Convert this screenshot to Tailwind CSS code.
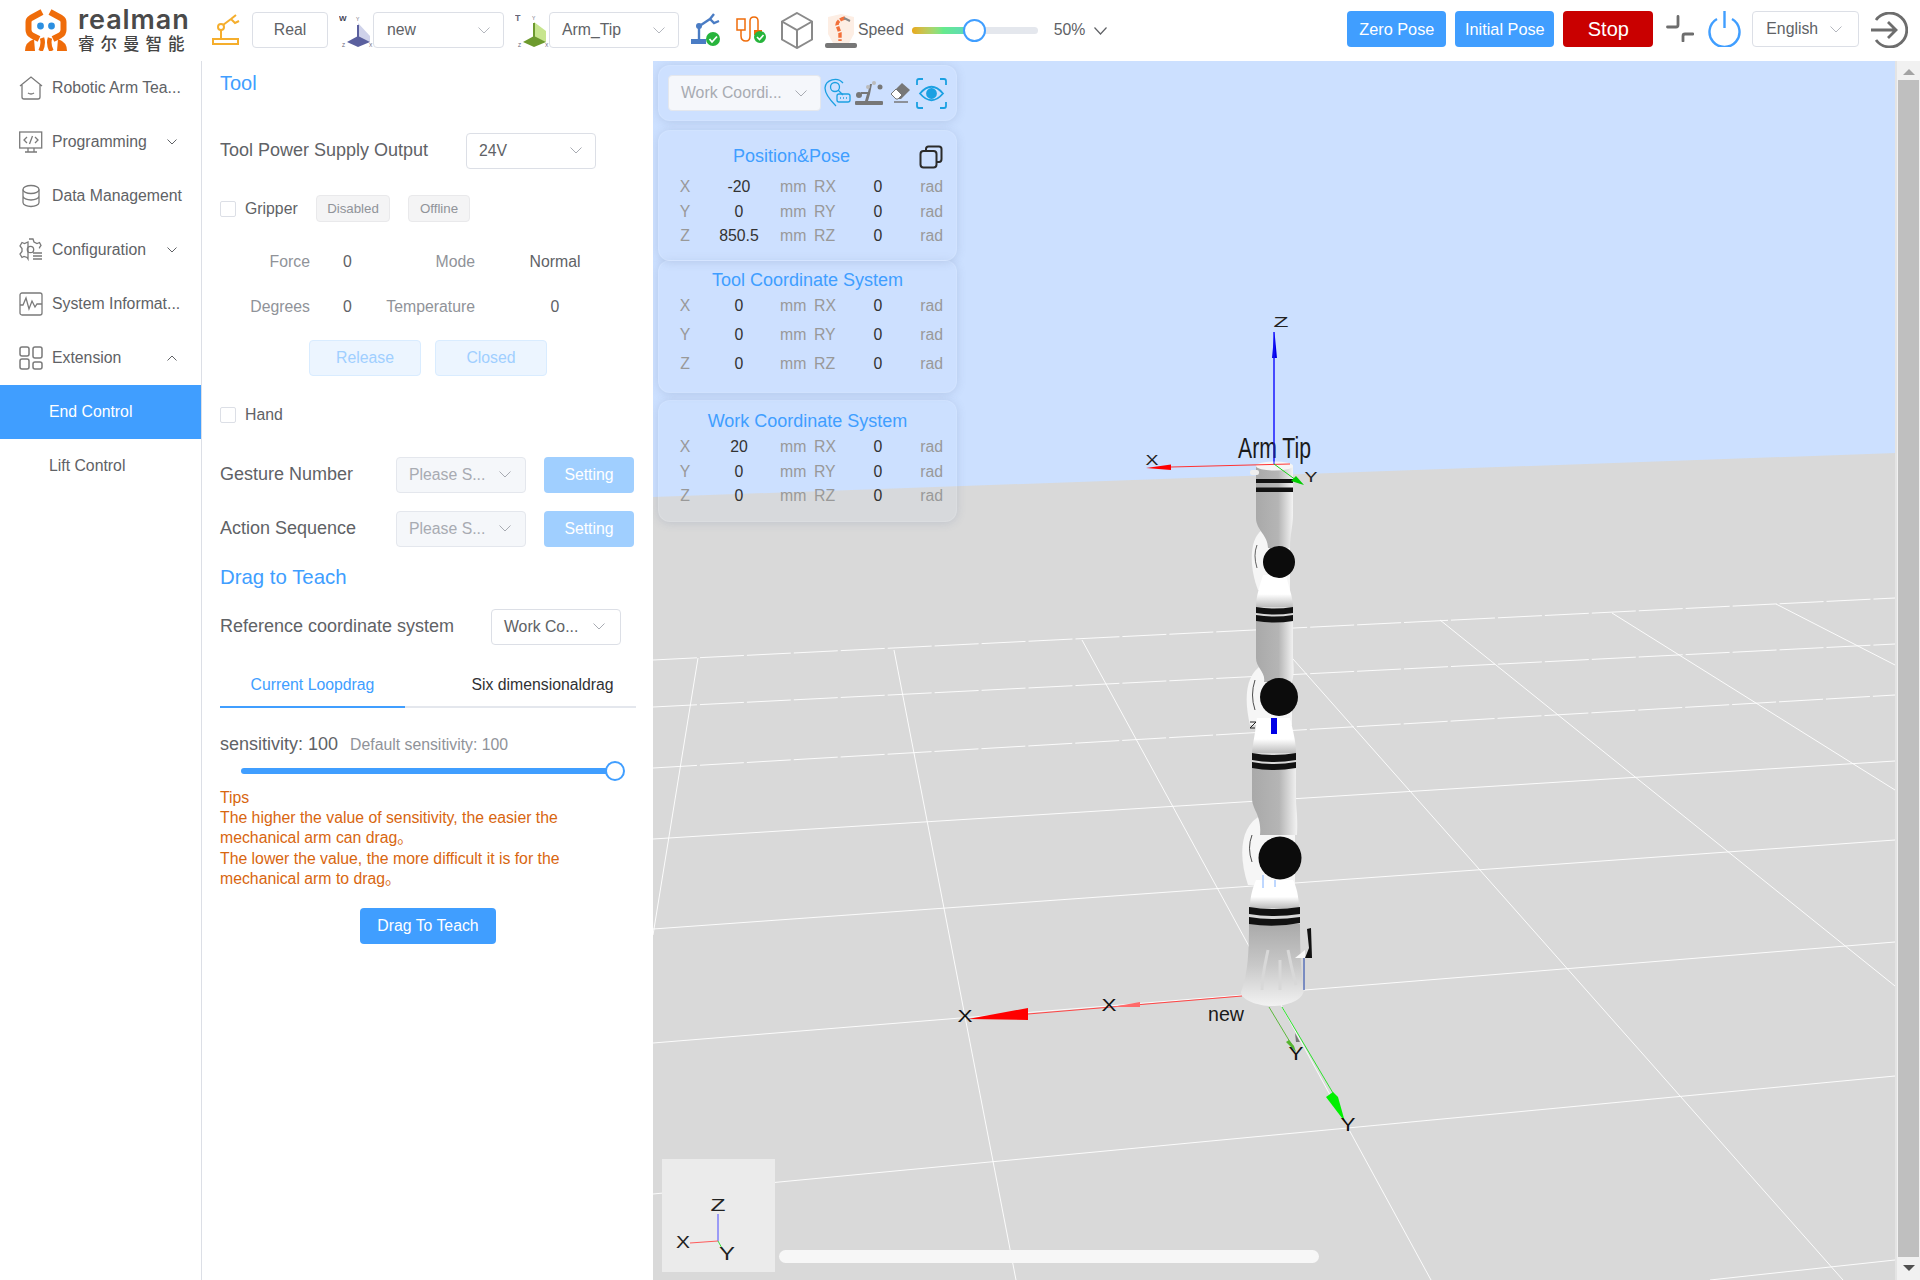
<!DOCTYPE html>
<html lang="en">
<head>
<meta charset="utf-8">
<title>Realman</title>
<script src="https://cdn.jsdelivr.net/npm/@tailwindcss/browser@4"></script>
</head>
<body class="m-0 bg-white">
<div class="w-[1920px] h-[1280px] overflow-hidden flex flex-col font-['Liberation_Sans','Noto_Sans_CJK_SC',sans-serif] text-[#606266] text-[15.8px]">

  <!-- HEADER -->
  <header class="h-[61px] shrink-0 flex items-start bg-white">
    <svg class="ml-[25px] mt-[9px] shrink-0" width="42" height="42" viewBox="0 0 42 42" fill="none">
      <path d="M17 3 L6 9 Q3.500 10.500 3.500 13 L3.500 21 Q3.500 24.500 7 26.500 L14 30" stroke="#ef6c0a" stroke-width="6" stroke-linejoin="round"/>
      <path d="M25 3 L36 9 Q38.500 10.500 38.500 13 L38.500 21 Q38.500 24.500 35 26.500 L28 30" stroke="#ef6c0a" stroke-width="6" stroke-linejoin="round"/>
      <circle cx="15.500" cy="17" r="3.400" fill="#2c8fe0"/><circle cx="26.500" cy="17" r="3.400" fill="#2c8fe0"/>
      <path d="M0 42 Q0 33 9 30 L10 42 Z" fill="#ef6c0a"/><path d="M42 42 Q42 33 33 30 L32 42 Z" fill="#ef6c0a"/>
      <path d="M17 29 Q19 35 15.500 42" stroke="#ef6c0a" stroke-width="4.500"/><path d="M25 29 Q23 35 26.500 42" stroke="#ef6c0a" stroke-width="4.500"/>
    </svg>
    <div class="ml-[11px] mt-[8px] w-[112px] shrink-0 flex flex-col">
      <span class="font-['Inter',sans-serif] font-semibold text-[27px] leading-[24px] tracking-[0.9px] text-[#4a4a4a] whitespace-nowrap">realman</span>
      <span class="font-['Noto_Sans_CJK_SC',sans-serif] font-medium text-[16.500px] leading-[20px] tracking-[6px] mt-[1px] text-[#444] whitespace-nowrap">睿尔曼智能</span>
    </div>
    <svg class="ml-[22px] mt-[14px] shrink-0" width="28" height="32" viewBox="0 0 28 32" fill="none" stroke="#f5ae2d" stroke-width="2">
      <rect x="1" y="25" width="25" height="5"/><path d="M9 25 V15"/><circle cx="9" cy="13" r="3"/><path d="M11 11 L19 5 M19 5 L24 1 M19 5 L23 9 L27 7"/>
    </svg>
    <div class="ml-[12px] mt-[12px] w-[76px] h-[36px] shrink-0 border border-[#dcdfe6] rounded flex items-center justify-center">Real</div>
    <svg class="ml-[11px] mt-[13px] shrink-0" width="34" height="36" viewBox="0 0 34 36">
      <text x="0" y="8" font-size="8" font-weight="700" fill="#445" font-family="Liberation Sans">W</text>
      <path d="M19 10 L31 23 V29 L19 24Z" fill="#cfd2ea"/><path d="M19 12 V24" stroke="#5a5f9e" stroke-width="2"/><path d="M8 29 L19 23 L31 29 L19 34 Z" fill="#5a5f9e"/>
      <text x="17" y="8" font-size="5" fill="#667" font-family="Liberation Sans">Y</text><text x="30" y="34" font-size="5" fill="#667" font-family="Liberation Sans">X</text><text x="3" y="34" font-size="5" fill="#667" font-family="Liberation Sans">Z</text>
    </svg>
    <div class="mt-[12px] w-[131px] h-[36px] shrink-0 border border-[#dcdfe6] rounded flex items-center justify-between pl-[13px] pr-[13px] box-border">new
      <svg width="12" height="7" viewBox="0 0 12 7" fill="none" stroke="#b4b7be"><path d="M.5 .5 6 6 11.500 .5"/></svg>
    </div>
    <svg class="ml-[11px] mt-[13px] shrink-0" width="34" height="36" viewBox="0 0 34 36">
      <text x="0" y="8" font-size="9" font-weight="700" fill="#667" font-family="Liberation Sans">T</text>
      <path d="M19 9 L31 18 V29 L19 24Z" fill="#c7e58e"/><path d="M19 10 V24" stroke="#6d9a2e" stroke-width="2"/><path d="M8 29 L19 23 L31 29 L19 34 Z" fill="#6d9a2e"/>
      <text x="17" y="7" font-size="5" fill="#667" font-family="Liberation Sans">Y</text><text x="30" y="34" font-size="5" fill="#667" font-family="Liberation Sans">X</text><text x="3" y="34" font-size="5" fill="#667" font-family="Liberation Sans">Z</text>
    </svg>
    <div class="mt-[12px] w-[130px] h-[36px] shrink-0 border border-[#dcdfe6] rounded flex items-center justify-between pl-[12px] pr-[13px] box-border">Arm_Tip
      <svg width="12" height="7" viewBox="0 0 12 7" fill="none" stroke="#b4b7be"><path d="M.5 .5 6 6 11.500 .5"/></svg>
    </div>
    <svg class="ml-[12px] mt-[13px] shrink-0" width="30" height="34" viewBox="0 0 30 34" fill="none">
      <path d="M0 26 H15 V31 H0Z" fill="#4a7cc4"/><path d="M8 26 V15" stroke="#4a7cc4" stroke-width="2.400"/><circle cx="8" cy="13" r="3" fill="#4a7cc4"/><path d="M10 12 L19 6 M19 6 L23 1 M19 6 L23 10 L28 8" stroke="#4a7cc4" stroke-width="2.400"/>
      <circle cx="22" cy="26" r="7" fill="#27b43c"/><path d="M18.500 26 L21 29 L26 23.500" stroke="#fff" stroke-width="1.800"/>
    </svg>
    <svg class="ml-[14px] mt-[16px] shrink-0" width="34" height="28" viewBox="0 0 34 28" fill="none">
      <rect x="2" y="3" width="8" height="11" stroke="#ef6c0a" stroke-width="1.500"/><path d="M6 14 V20 Q6 25 11 25 Q15 25 15 20 V5 Q15 1 19 1 Q23 1 23 5 V14" stroke="#ef6c0a" stroke-width="1.500"/><rect x="19" y="14" width="8" height="5" fill="#ef6c0a"/>
      <circle cx="25" cy="21" r="6" fill="#27b43c"/><path d="M22 21 L24.500 23.500 L28.500 19" stroke="#fff" stroke-width="1.600"/>
    </svg>
    <svg class="ml-[11px] mt-[12px] shrink-0" width="34" height="37" viewBox="0 0 34 37" fill="none" stroke="#8a8a8a" stroke-width="2">
      <path d="M17 1 L32 9.500 V27.500 L17 36 L2 27.500 V9.500 Z M2 9.500 L17 18 L32 9.500 M17 18 V36"/>
    </svg>
    <svg class="ml-[11px] mt-[14px] shrink-0" width="34" height="34" viewBox="0 0 34 34" fill="none">
      <path d="M3 3 L16 0 L29 3 V20 L24 29 H8 L3 20Z" fill="#fdeee4"/>
      <path d="M20 4 Q12 6 12 11 L15 19 L15 27" stroke="#f2703a" stroke-width="3.400" stroke-dasharray="5 1.500"/>
      <path d="M19 4 L25 7" stroke="#888" stroke-width="2"/>
      <rect x="0" y="29" width="32" height="5" rx="2" fill="#777"/>
    </svg>
    <span class="-ml-[1px] mt-[21px] leading-[18px] shrink-0">Speed</span>
    <div class="ml-[8px] mt-[27px] w-[126px] h-[7px] rounded-full bg-[#e4e7ed] relative shrink-0">
      <div class="h-full w-[62px] rounded-l-full bg-gradient-to-r from-[#e9a90f] via-[#66ea8c] to-[#5fd3c5]"></div>
      <div class="absolute left-[51px] -top-[8px] w-[23px] h-[23px] rounded-full border-2 border-[#409eff] bg-white box-border"></div>
    </div>
    <span class="ml-[16px] mt-[21px] leading-[18px] shrink-0">50%</span>
    <svg class="ml-[9px] mt-[27px] shrink-0" width="13" height="8" viewBox="0 0 13 8" fill="none" stroke="#606266" stroke-width="1.200"><path d="M.5 .5 6.500 7 12.500 .5"/></svg>
    <div class="ml-[240px] mt-[11px] w-[99px] h-[36px] shrink-0 bg-[#409eff] rounded text-white text-[16.300px] flex items-center justify-center">Zero Pose</div>
    <div class="ml-[9px] mt-[11px] w-[99px] h-[36px] shrink-0 bg-[#409eff] rounded text-white text-[16.300px] flex items-center justify-center">Initial Pose</div>
    <div class="ml-[9px] mt-[11px] w-[90px] h-[36px] shrink-0 bg-[#c90000] rounded text-white text-[20px] flex items-center justify-center">Stop</div>
    <svg class="ml-[13px] mt-[15px] shrink-0" width="28" height="27" viewBox="0 0 28 27" fill="none" stroke="#6d6d6d" stroke-width="2.800" stroke-linecap="round"><path d="M1.500 12 H10 Q12 12 12 10 V1.500"/><path d="M27 19 H19 Q17 19 17 21 V26"/></svg>
    <svg class="ml-[14px] mt-[11px] shrink-0" width="33" height="36" viewBox="0 0 33 36" fill="none" stroke="#409eff" stroke-width="2.400"><path d="M9 8 A15 15 0 1 0 24 8"/><path d="M16.500 0 V17"/></svg>
    <div class="ml-[11px] mt-[11px] w-[107px] h-[36px] shrink-0 border border-[#dcdfe6] rounded flex items-center justify-between pl-[13px] pr-[16px] box-border">English
      <svg width="12" height="7" viewBox="0 0 12 7" fill="none" stroke="#b4b7be"><path d="M.5 .5 6 6 11.500 .5"/></svg>
    </div>
    <svg class="ml-[12px] mt-[12px] shrink-0" width="37" height="36" viewBox="0 0 37 36" fill="none" stroke="#6d6d6d" stroke-width="2.800"><path d="M5 8 A17 17 0 1 1 5 28"/><path d="M0 18 H24 M17 10 L25 18 L17 26"/></svg>
  </header>

  <div class="flex-1 flex min-h-0">
    <!-- SIDEBAR -->
    <nav class="w-[202px] shrink-0 border-r border-[#dcdfe6] box-border flex flex-col">
      <div class="h-[54px] flex items-center pl-[19px]">
        <svg class="shrink-0" width="24" height="24" viewBox="0 0 24 24" fill="none" stroke="#7a7a7a" stroke-width="1.300"><path d="M1 10 L12 1 L23 10 M3 9 V21 Q3 23 5 23 H19 Q21 23 21 21 V9 M9 17 Q12 19 15 17"/></svg>
        <span class="ml-[9px] whitespace-nowrap">Robotic Arm Tea...</span>
      </div>
      <div class="h-[54px] flex items-center pl-[19px]">
        <svg class="shrink-0" width="24" height="24" viewBox="0 0 24 24" fill="none" stroke="#7a7a7a" stroke-width="1.300"><rect x=".7" y="2" width="22" height="16"/><path d="M8 7 L5 10 L8 13 M16 7 L19 10 L16 13 M13.500 6 L10.500 14 M9 18 V22 M15 18 V22 M6 22 H18"/></svg>
        <span class="ml-[9px]">Programming</span>
        <svg class="ml-auto mr-[24px]" width="10" height="6" viewBox="0 0 10 6" fill="none" stroke="#606266"><path d="M.5 .5 5 5 9.500 .5"/></svg>
      </div>
      <div class="h-[54px] flex items-center pl-[19px]">
        <svg class="shrink-0" width="24" height="24" viewBox="0 0 24 24" fill="none" stroke="#7a7a7a" stroke-width="1.300"><ellipse cx="12" cy="5.500" rx="8" ry="4"/><path d="M4 5.500 V18.500 C4 21 8 22.500 12 22.500 C16 22.500 20 21 20 18.500 V5.500 M4 12 C4 14.500 8 16 12 16 C16 16 20 14.500 20 12"/></svg>
        <span class="ml-[9px] whitespace-nowrap">Data Management</span>
      </div>
      <div class="h-[54px] flex items-center pl-[19px]">
        <svg class="shrink-0" width="24" height="24" viewBox="0 0 24 24" fill="none" stroke="#7a7a7a" stroke-width="1.300"><path d="M10 1 H14 L15 4 L18 5.500 L20.500 4.500 L22 7.500 L20.500 9.500 V10.500 M9 21 L8 19.500 L5 18.500 L3 19.500 L1 16 L3 13.500 V10.500 L1 8 L3 4.500 L5.500 5.500 L9 4 Z"/><circle cx="11.500" cy="11.500" r="3.200"/><path d="M14 15 H23 M14 18 H23 M14 21 H23"/></svg>
        <span class="ml-[9px]">Configuration</span>
        <svg class="ml-auto mr-[24px]" width="10" height="6" viewBox="0 0 10 6" fill="none" stroke="#606266"><path d="M.5 .5 5 5 9.500 .5"/></svg>
      </div>
      <div class="h-[54px] flex items-center pl-[19px]">
        <svg class="shrink-0" width="24" height="24" viewBox="0 0 24 24" fill="none" stroke="#7a7a7a" stroke-width="1.300"><rect x="1" y="1" width="22" height="22" rx="2"/><path d="M1 13 H4 L7 6 L10 17 L13 9 L16 15 L18 12 H23"/></svg>
        <span class="ml-[9px] whitespace-nowrap">System Informat...</span>
      </div>
      <div class="h-[54px] flex items-center pl-[19px]">
        <svg class="shrink-0" width="24" height="24" viewBox="0 0 24 24" fill="none" stroke="#7a7a7a" stroke-width="1.500"><rect x="1" y="1" width="9" height="9" rx="2"/><rect x="14" y="1" width="9" height="11" rx="2"/><rect x="1" y="13" width="9" height="10" rx="2"/><rect x="14" y="16" width="9" height="7" rx="2"/></svg>
        <span class="ml-[9px]">Extension</span>
        <svg class="ml-auto mr-[24px]" width="10" height="6" viewBox="0 0 10 6" fill="none" stroke="#606266"><path d="M.5 5.500 5 1 9.500 5.500"/></svg>
      </div>
      <div class="h-[54px] flex items-center pl-[49px] bg-[#409eff] text-white">End Control</div>
      <div class="h-[54px] flex items-center pl-[49px]">Lift Control</div>
    </nav>

    <!-- CONTROL PANEL -->
    <section class="w-[451px] shrink-0 pl-[18px] pr-[17px] box-border flex flex-col">
      <div class="h-[44px] flex items-center text-[20px] text-[#409eff]">Tool</div>
      <div class="mt-[28px] h-[35px] flex items-center text-[18px]">
        <span class="w-[246px]">Tool Power Supply Output</span>
        <div class="w-[130px] h-[36px] border border-[#dcdfe6] rounded flex items-center justify-between pl-[12px] pr-[13px] box-border text-[15.800px]">24V
          <svg width="12" height="7" viewBox="0 0 12 7" fill="none" stroke="#a8abb2"><path d="M.5 .5 6 6 11.500 .5"/></svg>
        </div>
      </div>
      <div class="mt-[27px] h-[27px] flex items-center">
        <span class="w-[16px] h-[16px] border border-[#dcdfe6] rounded-[2px] box-border shrink-0"></span>
        <span class="ml-[9px] w-[71px]">Gripper</span>
        <span class="w-[74px] h-[27px] rounded bg-[#f4f4f5] border border-[#e9e9eb] box-border text-[#909399] text-[13.300px] flex items-center justify-center">Disabled</span>
        <span class="ml-[18px] w-[62px] h-[27px] rounded bg-[#f4f4f5] border border-[#e9e9eb] box-border text-[#909399] text-[13.300px] flex items-center justify-center">Offline</span>
      </div>
      <div class="mt-[25px] h-[30px] flex items-center">
        <span class="w-[90px] text-right text-[#909399]">Force</span><span class="w-[36px] ml-[33px]">0</span>
        <span class="w-[96px] text-right text-[#909399]">Mode</span><span class="w-[120px] ml-[20px] text-center">Normal</span>
      </div>
      <div class="mt-[15px] h-[30px] flex items-center">
        <span class="w-[90px] text-right text-[#909399]">Degrees</span><span class="w-[36px] ml-[33px]">0</span>
        <span class="w-[96px] text-right text-[#909399]">Temperature</span><span class="w-[120px] ml-[20px] text-center">0</span>
      </div>
      <div class="mt-[18px] flex ml-[89px] gap-[14px]">
        <span class="w-[112px] h-[36px] rounded bg-[#ecf5ff] border border-[#d9ecff] box-border text-[#a0cfff] flex items-center justify-center">Release</span>
        <span class="w-[112px] h-[36px] rounded bg-[#ecf5ff] border border-[#d9ecff] box-border text-[#a0cfff] flex items-center justify-center">Closed</span>
      </div>
      <div class="mt-[25px] h-[28px] flex items-center">
        <span class="w-[16px] h-[16px] border border-[#dcdfe6] rounded-[2px] box-border shrink-0"></span>
        <span class="ml-[9px]">Hand</span>
      </div>
      <div class="mt-[28px] h-[35px] flex items-center text-[18px]">
        <span class="w-[176px]">Gesture Number</span>
        <div class="w-[130px] h-[36px] border border-[#e4e7ed] bg-[#f5f7fa] rounded flex items-center justify-between pl-[12px] pr-[14px] box-border text-[15.800px] text-[#a8abb2]">Please S...
          <svg width="12" height="7" viewBox="0 0 12 7" fill="none" stroke="#a8abb2"><path d="M.5 .5 6 6 11.500 .5"/></svg>
        </div>
        <span class="ml-[18px] w-[90px] h-[36px] rounded bg-[#a0cfff] text-white text-[15.800px] flex items-center justify-center">Setting</span>
      </div>
      <div class="mt-[19px] h-[35px] flex items-center text-[18px]">
        <span class="w-[176px]">Action Sequence</span>
        <div class="w-[130px] h-[36px] border border-[#e4e7ed] bg-[#f5f7fa] rounded flex items-center justify-between pl-[12px] pr-[14px] box-border text-[15.800px] text-[#a8abb2]">Please S...
          <svg width="12" height="7" viewBox="0 0 12 7" fill="none" stroke="#a8abb2"><path d="M.5 .5 6 6 11.500 .5"/></svg>
        </div>
        <span class="ml-[18px] w-[90px] h-[36px] rounded bg-[#a0cfff] text-white text-[15.800px] flex items-center justify-center">Setting</span>
      </div>
      <div class="mt-[13px] h-[36px] flex items-center text-[20.400px] text-[#409eff]">Drag to Teach</div>
      <div class="mt-[14px] h-[35px] flex items-center text-[18px]">
        <span class="w-[271px]">Reference coordinate system</span>
        <div class="w-[130px] h-[36px] border border-[#dcdfe6] rounded flex items-center justify-between pl-[12px] pr-[15px] box-border text-[15.800px]">Work Co...
          <svg width="12" height="7" viewBox="0 0 12 7" fill="none" stroke="#a8abb2"><path d="M.5 .5 6 6 11.500 .5"/></svg>
        </div>
      </div>
      <div class="mt-[20px] h-[44px] w-[416px] flex border-b-2 border-[#e4e7ed] box-border">
        <div class="w-[185px] h-[44px] border-b-2 border-[#409eff] text-[#409eff] box-border flex items-center justify-center">Current Loopdrag</div>
        <div class="flex-1 h-[42px] flex items-center justify-center text-[#303133] pl-[44px]">Six dimensionaldrag</div>
      </div>
      <div class="mt-[22px] h-[28px] flex items-baseline leading-[28px]">
        <span class="text-[18px]">sensitivity: 100</span>
        <span class="ml-[12px] text-[#909399]">Default sensitivity: 100</span>
      </div>
      <div class="mt-[3px] h-[20px] ml-[21px] w-[374px] relative flex items-center">
        <div class="w-full h-[6px] rounded-full bg-[#409eff]"></div>
        <div class="absolute -right-[10px] top-0 w-[20px] h-[20px] rounded-full border-2 border-[#409eff] bg-white box-border"></div>
      </div>
      <div class="mt-[7px] leading-[20.200px] text-[#d8660f]">
        <div>Tips</div>
        <div>The higher the value of sensitivity, the easier the</div>
        <div>mechanical arm can drag。</div>
        <div>The lower the value, the more difficult it is for the</div>
        <div>mechanical arm to drag。</div>
      </div>
      <div class="mt-[19px] ml-[140px] w-[136px] h-[36px] rounded bg-[#409eff] text-white flex items-center justify-center">Drag To Teach</div>
    </section>

    <!-- 3D VIEW -->
    <main class="flex-1 relative bg-[#cce0ff] overflow-hidden">
      <svg class="absolute inset-0" width="1267" height="1219" viewBox="653 61 1267 1219" font-family="Liberation Sans">
        <defs>
          <linearGradient id="arm" x1="0" x2="1" y1="0" y2="0"><stop offset="0" stop-color="#a9a9a9"/><stop offset=".6" stop-color="#b5b5b5"/><stop offset=".85" stop-color="#dcdcdc"/><stop offset="1" stop-color="#f4f4f4"/></linearGradient>
          <linearGradient id="wht" x1="0" x2="0" y1="0" y2="1"><stop offset="0" stop-color="#fff"/><stop offset=".6" stop-color="#fff"/><stop offset="1" stop-color="#bdbdbd"/></linearGradient>
          <linearGradient id="base" x1="0" x2="0" y1="0" y2="1"><stop offset="0" stop-color="#aaa"/><stop offset=".5" stop-color="#c8c8c8"/><stop offset="1" stop-color="#f2f2f2"/></linearGradient>
        </defs>
        <path d="M653 497 L1896 453 V1280 H653 Z" fill="#d9d9d9"/>
        <g stroke="#fff" fill="none">
          <g stroke-width="1" stroke-dasharray="44 3" stroke-opacity=".9">
            <path d="M653 660 L1895 598"/><path d="M653 707 L1895 644"/><path d="M653 768 L1895 695"/>
          </g>
          <g stroke-width="1" stroke-opacity=".9">
            <path d="M653 839 L1895 761"/><path d="M653 929 L1895 840"/><path d="M653 1043 L1895 942"/><path d="M653 1194 L1895 1076"/><path d="M1710 1280 L1895 1260"/>
            <path d="M698 658 L653 935"/><path d="M894 650 L1016 1280"/><path d="M1082 640 L1431 1280"/><path d="M1270 633 L1843 1280"/>
            <path d="M1440 620 L1895 986"/><path d="M1612 613 L1895 790"/><path d="M1776 604 L1895 665"/>
          </g>
        </g>

        <!-- tip axes -->
        <path d="M1274 332 V464" stroke="#1a1aff" stroke-width="1"/><path d="M1274.500 332 L1277 358 H1272Z" fill="#0000e6"/>
        <text x="1281" y="327" font-size="14" text-anchor="middle" fill="#222" textLength="15" lengthAdjust="spacingAndGlyphs">Z</text>

        <!-- arm upper -->
        <path d="M1262 530 C1248 540 1250 570 1258 590 L1290 590 V530Z" fill="#f6f6f6"/>
        <path d="M1256 466 V518 C1256 530 1268 535 1268 548 L1290 548 C1290 535 1293 525 1293 515 V466Z" fill="url(#arm)"/>
        <rect x="1250" y="470" width="9" height="5" rx="2" fill="#eee"/>
        <ellipse cx="1274.500" cy="466" rx="18.500" ry="4.500" fill="#f6f6f6"/>
        <rect x="1256" y="479" width="37" height="4" fill="#111"/><rect x="1256" y="487.500" width="37" height="4.500" fill="#111"/>
        <path d="M1263 575 C1259 588 1256 597 1256 607 H1293 C1293 597 1288 585 1286 575Z" fill="url(#wht)"/>
        <circle cx="1279" cy="562" r="16" fill="#0c0c0c"/>
        <path d="M1257 545 Q1253 555 1257 568" stroke="#222" fill="none" stroke-width=".7"/>

        <path d="M1262 665 C1245 675 1244 700 1250 725 L1292 725 V665Z" fill="#f6f6f6"/>
        <path d="M1256 621 V658 C1256 668 1266 672 1264 682 L1292 682 C1295 672 1293 665 1293 655 V621Z" fill="url(#arm)"/>
        <path d="M1256 607 Q1274 610 1293 607 V613 Q1274 616 1256 613Z" fill="#111"/><path d="M1256 615 Q1274 618 1293 615 V621 Q1274 624 1256 621Z" fill="#111"/>
        <path d="M1257 718 C1255 735 1253 742 1252 753 H1296 C1296 742 1293 730 1290 718Z" fill="url(#wht)"/>
        <circle cx="1279" cy="697" r="19" fill="#0c0c0c"/>
        <path d="M1255 680 Q1250 695 1255 710" stroke="#222" fill="none" stroke-width=".8"/>
        <rect x="1271" y="718" width="6" height="16" fill="#0000e6"/>
        <path d="M1250 722 h6 l-6 6 h5" stroke="#222" fill="none" stroke-width="1"/>

        <path d="M1262 815 C1240 825 1238 855 1248 885 L1295 885 V815Z" fill="#f6f6f6"/>
        <path d="M1252 766 V798 C1252 810 1262 815 1260 835 L1297 835 C1298 815 1296 810 1296 798 V766Z" fill="url(#arm)"/>
        <path d="M1252 753 Q1274 757 1296 753 V760 Q1274 764 1252 760Z" fill="#111"/><path d="M1252 762 Q1274 766 1296 762 V768 Q1274 772 1252 768Z" fill="#111"/>
        <path d="M1256 880 C1252 890 1250 897 1250 908 H1299 C1299 897 1296 885 1293 880Z" fill="url(#wht)"/>
        <circle cx="1280" cy="858" r="21.500" fill="#0c0c0c"/>
        <path d="M1252 835 Q1247 848 1252 862" stroke="#222" fill="none" stroke-width=".8"/>
        <path d="M1263 875 V888 M1275 880 V887" stroke="#7fb0ff" stroke-width="1"/>

        <path d="M1249 924 C1249 950 1248 975 1241 992 C1241 1000 1258 1006 1272 1006 C1288 1006 1303 1000 1304 990 C1301 975 1300 950 1300 924Z" fill="url(#base)"/>
        <path d="M1262 990 C1262 975 1266 960 1268 950 M1280 990 V960 M1296 985 C1292 970 1290 960 1288 950" stroke="#d8d8d8" stroke-width="3" fill="none"/>
        <path d="M1249 907 Q1274 911 1300 907 V914 Q1274 918 1249 914Z" fill="#111"/><path d="M1249 917 Q1274 921 1300 917 V923 Q1274 928 1249 924Z" fill="#111"/>
        <path d="M1295 958 L1305 950 V958Z" fill="#f8f8f8"/>
        <path d="M1307 929 L1311 928 L1312 958 H1305 L1309 948Z" fill="#111"/>
        <path d="M1304 958 V990" stroke="#1a3ea8" stroke-width="1"/>

        <!-- tip red/green overlay -->
        <path d="M1290 464 L1171 467" stroke="#f33" stroke-width="1"/><path d="M1146 468 L1171 464.500 V470Z" fill="#f00"/>
        <text x="1152" y="465" font-size="14" text-anchor="middle" fill="#222" textLength="13" lengthAdjust="spacingAndGlyphs">X</text>
        <path d="M1274 464 L1300 483" stroke="#1bd41b" stroke-width="1"/><path d="M1304 485 L1291 481 L1296 476Z" fill="#0c0"/>
        <text x="1311" y="482" font-size="14" text-anchor="middle" fill="#222" textLength="13" lengthAdjust="spacingAndGlyphs">Y</text>
        <text x="1238" y="458" font-size="29" fill="#1a1a1a" textLength="73" lengthAdjust="spacingAndGlyphs">Arm Tip</text>
        <path d="M1274 332 V464" stroke="#1a1aff" stroke-width="1"/>

        <!-- base axes -->
        <path d="M1242 996 L1028 1014" stroke="#f44" stroke-width="1"/>
        <path d="M968 1019 L1028 1008 V1020Z" fill="#f00"/>
        <path d="M1112 1007 L1140 1002 V1007Z" fill="#ff6a6a"/>
        <text x="965" y="1022" font-size="17" text-anchor="middle" fill="#111" textLength="15" lengthAdjust="spacingAndGlyphs">X</text>
        <text x="1109" y="1011" font-size="17" text-anchor="middle" fill="#111" textLength="15" lengthAdjust="spacingAndGlyphs">X</text>
        <text x="1208" y="1021" font-size="21" fill="#1a1a1a" textLength="36" lengthAdjust="spacingAndGlyphs">new</text>
        <path d="M1269 1007 L1293 1047" stroke="#5cb83c" stroke-width="1"/><path d="M1286 1042 L1289 1040 L1294 1046 L1296 1052Z" fill="#55b52f"/>
        <path d="M1282 1007 L1333 1093" stroke="#2be32b" stroke-width="1"/><path d="M1326 1097 L1333 1092 L1338 1097 L1345 1122Z" fill="#00f000"/>
        <path d="M1295 1033 L1300 1042 L1296 1042Z" fill="#777"/>
        <text x="1296" y="1060" font-size="18" text-anchor="middle" fill="#111" textLength="15" lengthAdjust="spacingAndGlyphs">Y</text>
        <text x="1348" y="1131" font-size="18" text-anchor="middle" fill="#111" textLength="15" lengthAdjust="spacingAndGlyphs">Y</text>

        <!-- mini axes -->
        <rect x="662" y="1159" width="113" height="113" fill="#ebebeb"/>
        <path d="M718 1214 V1241" stroke="#4a4aff"/><path d="M718 1241 L690 1243" stroke="#ff5a5a"/><path d="M718 1241 L723 1250" stroke="#3ae03a"/>
        <text x="718" y="1211" font-size="17" text-anchor="middle" fill="#222" textLength="15" lengthAdjust="spacingAndGlyphs">Z</text>
        <text x="683" y="1248" font-size="17" text-anchor="middle" fill="#222" textLength="14" lengthAdjust="spacingAndGlyphs">X</text>
        <text x="727" y="1260" font-size="19" text-anchor="middle" fill="#222" textLength="16" lengthAdjust="spacingAndGlyphs">Y</text>
      </svg>

      <!-- overlay cards -->
      <div class="absolute left-[5px] top-[4px] w-[299px] flex flex-col text-[#999]">
        <div class="h-[56px] rounded-[12px] bg-[#cfe2ff]/30 border border-white/10 shadow-[0_1px_10px_rgba(90,110,150,0.2)] flex items-center pl-[9px] box-border">
          <div class="w-[153px] h-[36px] bg-[#f5f7fb] border border-[#e4e7ed] rounded flex items-center justify-between pl-[12px] pr-[13px] box-border text-[#a8abb2] shrink-0 whitespace-nowrap">Work Coordi...
            <svg width="12" height="7" viewBox="0 0 12 7" fill="none" stroke="#a8abb2"><path d="M.5 .5 6 6 11.500 .5"/></svg>
          </div>
          <svg class="ml-[3px] shrink-0" width="27" height="30" viewBox="0 0 27 30" fill="none" stroke="#1ba0e2" stroke-width="1.300"><path d="M12 28 C6 22 1 16 1 10 A10 9 0 0 1 19 5"/><circle cx="11" cy="9" r="4.500"/><path d="M14 12 L19 17"/><rect x="13" y="16" width="13" height="8" rx="2"/><path d="M16 20 h1 M19 20 h1 M22 20 h1"/></svg>
          <svg class="ml-[4px] shrink-0" width="28" height="26" viewBox="0 0 28 26" fill="#777"><rect x="0" y="21" width="28" height="4" rx="1"/><path d="M10 21 L12 14 L6 14 V12 L13 12 L15 4 L17 4 L15 14 L13 21Z"/><circle cx="4" cy="15" r="3"/><circle cx="13" cy="7" r="2" fill="#bbb"/><circle cx="19" cy="3" r="2" fill="#bbb"/><circle cx="25" cy="7" r="2.500"/></svg>
          <svg class="ml-[7px] shrink-0" width="20" height="22" viewBox="0 0 20 22"><path d="M12 1 L20 8 L11 17 H6 L1 12Z" fill="#777"/><path d="M1 12 L6 7 L12 13 L8 17 H6Z" fill="#fff" stroke="#777"/><path d="M4 20 H18" stroke="#777" stroke-width="1.500"/></svg>
          <svg class="ml-[6px] shrink-0" width="31" height="31" viewBox="0 0 31 31" fill="none" stroke="#1ba0e2" stroke-width="1.800"><path d="M1 7 V3 Q1 1 3 1 H7 M24 1 H28 Q30 1 30 3 V7 M30 24 V28 Q30 30 28 30 H24 M7 30 H3 Q1 30 1 28 V24"/><path d="M4 15.500 Q15.500 2 27 15.500 Q15.500 29 4 15.500Z"/><circle cx="15.500" cy="15.500" r="4.500" fill="#1ba0e2"/></svg>
        </div>

        <div class="mt-[9px] h-[131px] relative rounded-[12px] bg-[#cfe2ff]/30 border border-white/10 shadow-[0_1px_10px_rgba(90,110,150,0.2)] box-border pt-[11px]">
          <div class="h-[28px] flex items-center justify-center text-[18px] text-[#409eff] pr-[32px]">Position&amp;Pose</div>
          <svg class="absolute right-[13px] top-[14px]" width="24" height="24" viewBox="0 0 24 24" fill="none" stroke="#2b2b2b" stroke-width="2"><rect x="1.500" y="6" width="16" height="16.500" rx="3"/><path d="M7 6 V4 Q7 1.500 9.500 1.500 H20 Q22.500 1.500 22.500 4 V14 Q22.500 17 20 17 H17.500"/></svg>
          <div class="mt-[5px] grid grid-cols-[52px_56px_47px_40px_48px_41px] grid-rows-[24.500px_24.500px_24.500px] items-center">
            <span class="text-center">X</span><span class="text-center text-[#333]">-20</span><span class="pl-[13px]">mm</span><span>RX</span><span class="text-center text-[#333]">0</span><span class="text-right">rad</span>
            <span class="text-center">Y</span><span class="text-center text-[#333]">0</span><span class="pl-[13px]">mm</span><span>RY</span><span class="text-center text-[#333]">0</span><span class="text-right">rad</span>
            <span class="text-center">Z</span><span class="text-center text-[#333]">850.5</span><span class="pl-[13px]">mm</span><span>RZ</span><span class="text-center text-[#333]">0</span><span class="text-right">rad</span>
          </div>
        </div>

        <div class="-mt-[1px] h-[133px] rounded-[12px] bg-[#cfe2ff]/30 border border-white/10 shadow-[0_1px_10px_rgba(90,110,150,0.2)] box-border pt-[7px]">
          <div class="h-[24px] flex items-center justify-center text-[18px] text-[#409eff]">Tool Coordinate System</div>
          <div class="-mt-[1px] grid grid-cols-[52px_56px_47px_40px_48px_41px] grid-rows-[29px_29px_29px] items-center">
            <span class="text-center">X</span><span class="text-center text-[#333]">0</span><span class="pl-[13px]">mm</span><span>RX</span><span class="text-center text-[#333]">0</span><span class="text-right">rad</span>
            <span class="text-center">Y</span><span class="text-center text-[#333]">0</span><span class="pl-[13px]">mm</span><span>RY</span><span class="text-center text-[#333]">0</span><span class="text-right">rad</span>
            <span class="text-center">Z</span><span class="text-center text-[#333]">0</span><span class="pl-[13px]">mm</span><span>RZ</span><span class="text-center text-[#333]">0</span><span class="text-right">rad</span>
          </div>
        </div>

        <div class="mt-[7px] h-[122px] rounded-[12px] bg-[#cfe2ff]/10 border border-white/10 shadow-[0_1px_10px_rgba(90,110,150,0.2)] box-border pt-[8px]">
          <div class="h-[24px] flex items-center justify-center text-[18px] text-[#409eff]">Work Coordinate System</div>
          <div class="mt-[2px] grid grid-cols-[52px_56px_47px_40px_48px_41px] grid-rows-[24.500px_24.500px_24.500px] items-center">
            <span class="text-center">X</span><span class="text-center text-[#333]">20</span><span class="pl-[13px]">mm</span><span>RX</span><span class="text-center text-[#333]">0</span><span class="text-right">rad</span>
            <span class="text-center">Y</span><span class="text-center text-[#333]">0</span><span class="pl-[13px]">mm</span><span>RY</span><span class="text-center text-[#333]">0</span><span class="text-right">rad</span>
            <span class="text-center">Z</span><span class="text-center text-[#333]">0</span><span class="pl-[13px]">mm</span><span>RZ</span><span class="text-center text-[#333]">0</span><span class="text-right">rad</span>
          </div>
        </div>
      </div>

      <!-- horizontal scrollbar -->
      <div class="absolute left-[126px] top-[1189px] w-[540px] h-[13px] rounded-full bg-[#f7f7f7]"></div>
      <!-- vertical scrollbar -->
      <div class="absolute right-0 top-0 bottom-0 w-[25px] bg-[#f1f1f1] border-l-2 border-[#e4e4e4] box-border flex flex-col items-center">
        <div class="mt-[8px] w-0 h-0 border-x-[6px] border-x-transparent border-b-[6px] border-b-[#a3a3a3]"></div>
        <div class="mt-[5px] w-[21px] flex-1 bg-[#bfbfbf]"></div>
        <div class="mt-[8px] mb-[9px] w-0 h-0 border-x-[6px] border-x-transparent border-t-[6px] border-t-[#505050]"></div>
      </div>
    </main>
  </div>
</div>
</body>
</html>
